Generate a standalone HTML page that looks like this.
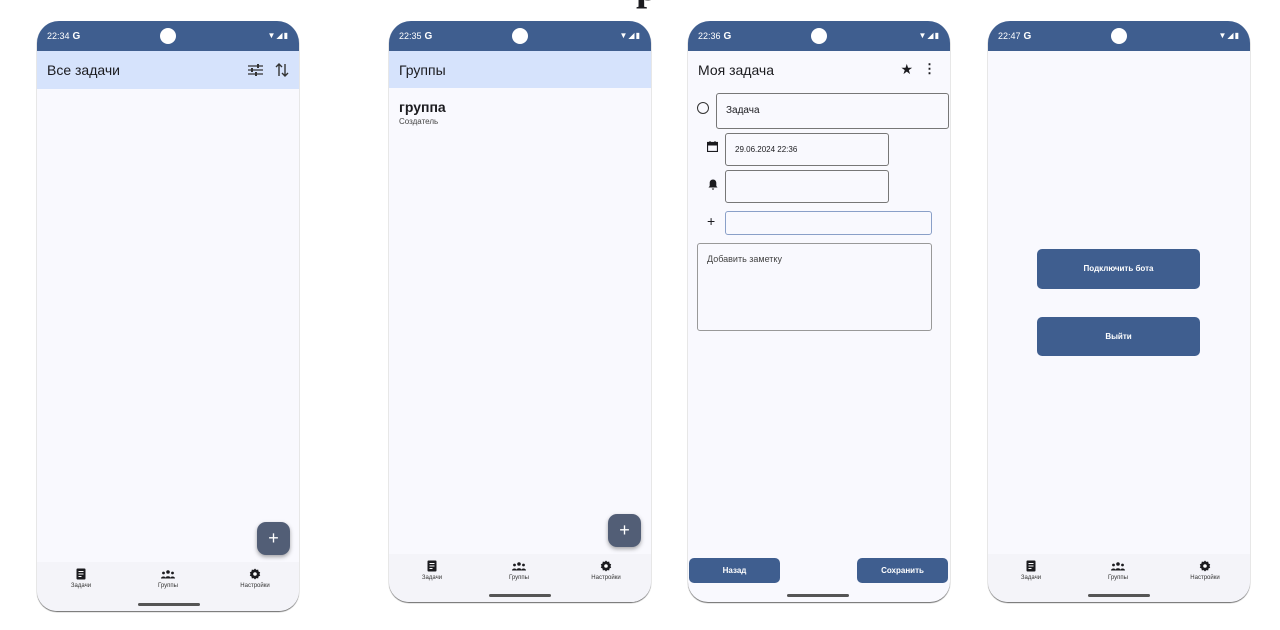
<!DOCTYPE html>
<html><head><meta charset="utf-8"><style>
*{margin:0;padding:0;box-sizing:border-box}
body{width:1280px;height:630px;background:#fff;position:relative;overflow:hidden;font-family:"Liberation Sans",sans-serif;color:#1b1b1f}
.ph{position:absolute;top:21px;width:262px;background:#f9f9fe;border-radius:22px 22px 20px 20px;overflow:hidden;box-shadow:0 1px 1px #666}
.sb{position:absolute;left:0;top:0;width:100%;height:30px;background:#3f5e8f;color:#fff;font-size:9px}
.sb .t{position:absolute;left:10px;top:10px}
.sb .t b{font-size:10px;margin-left:3px}
.sb .cam{position:absolute;left:123px;top:7px;width:16px;height:16px;border-radius:50%;background:#fff}
.sb .ic{position:absolute;right:10px;top:10px;font-size:8px;letter-spacing:1px}
.ab{position:absolute;left:0;top:30px;width:100%;height:38px;background:#d6e3fc;font-size:14px;padding:11px 10px}
.nav{position:absolute;left:0;width:100%;height:50px;background:#f4f4f9}
.nav div{position:absolute;top:6px;width:60px;text-align:center;font-size:6px;color:#333}
.nav svg{display:block;margin:0 auto 3px}
.hb{position:absolute;width:62px;height:3px;border-radius:2px;background:#555}
.fab{position:absolute;width:33px;height:33px;border-radius:9px;background:#525e76;color:#fff;font-size:18px;text-align:center;line-height:32px;box-shadow:0 2px 4px rgba(0,0,0,.35)}
.fld{position:absolute;border:1px solid #777;border-radius:3px;font-size:10px}
.btn{position:absolute;background:#3f5e8f;color:#fff;font-size:8px;font-weight:bold;text-align:center;border-radius:5px}
</style></head><body>
<div style="position:absolute;left:636px;top:-37px;font-family:'Liberation Serif',serif;font-size:40px;font-weight:bold">р</div>

<svg width="0" height="0" style="position:absolute"><defs>
<symbol id="doc" viewBox="0 0 12 12"><rect x="1.5" y="0.5" width="9" height="11" rx="1" fill="#1b1b1f"/><rect x="3.5" y="3" width="5" height="1" fill="#fff"/><rect x="3.5" y="5.5" width="5" height="1" fill="#fff"/><rect x="3.5" y="8" width="3" height="1" fill="#fff"/></symbol>
<symbol id="grp" viewBox="0 0 14 10"><circle cx="7" cy="3" r="1.8" fill="#1b1b1f"/><circle cx="2.5" cy="4" r="1.4" fill="#1b1b1f"/><circle cx="11.5" cy="4" r="1.4" fill="#1b1b1f"/><path d="M4 9.5c0-3 6-3 6 0zM0 9.5c0-2 3-2.5 4-1.5v1.5zM14 9.5c0-2-3-2.5-4-1.5v1.5z" fill="#1b1b1f"/></symbol>
<symbol id="gear" viewBox="0 0 12 12"><path d="M6 0.5l1.3 1.4 1.9-.3.3 1.9 1.7.9-.7 1.6.7 1.6-1.7.9-.3 1.9-1.9-.3L6 11.5 4.7 10.1l-1.9.3-.3-1.9-1.7-.9.7-1.6-.7-1.6 1.7-.9.3-1.9 1.9.3z" fill="#1b1b1f"/><circle cx="6" cy="6" r="1.8" fill="#fff"/></symbol>
</defs></svg>

<div class="ph" style="left:37px;height:590px">
 <div class="sb"><span class="t">22:34<b>G</b></span><div class="cam"></div><span class="ic">▼◢▮</span></div>
 <div class="ab">Все задачи
  <svg style="position:absolute;right:36px;top:13px" width="15" height="12" viewBox="0 0 15 12"><g stroke="#333" stroke-width="1.3"><line x1="0" y1="2" x2="15" y2="2"/><line x1="0" y1="6" x2="15" y2="6"/><line x1="0" y1="10" x2="15" y2="10"/></g><g fill="#333"><rect x="9" y="0" width="2" height="4"/><rect x="3" y="4" width="2" height="4"/><rect x="7" y="8" width="2" height="4"/></g></svg>
  <svg style="position:absolute;right:10px;top:12px" width="14" height="14" viewBox="0 0 14 14"><g stroke="#333" stroke-width="1.4" fill="none"><path d="M4 13V1M1 4l3-3 3 3M10 1v12M7 10l3 3 3-3"/></g></svg>
 </div>
 <div class="fab" style="left:220px;top:501px">+</div>
 <div class="nav" style="top:541px"><div style="left:14px"><svg width="12" height="12"><use href="#doc"/></svg>Задачи</div><div style="left:101px"><svg width="14" height="10" style="margin-top:1px;margin-bottom:4px"><use href="#grp"/></svg>Группы</div><div style="left:188px"><svg width="12" height="12"><use href="#gear"/></svg>Настройки</div></div>
 <div class="hb" style="left:101px;top:582px"></div>
</div>

<div class="ph" style="left:389px;height:581px">
 <div class="sb"><span class="t">22:35<b>G</b></span><div class="cam"></div><span class="ic">▼◢▮</span></div>
 <div class="ab" style="height:37px">Группы</div>
 <div style="position:absolute;left:10px;top:78px;font-size:14px;font-weight:bold">группа</div>
 <div style="position:absolute;left:10px;top:96px;font-size:8px;color:#444">Создатель</div>
 <div class="fab" style="left:219px;top:493px">+</div>
 <div class="nav" style="top:533px"><div style="left:13px"><svg width="12" height="12"><use href="#doc"/></svg>Задачи</div><div style="left:100px"><svg width="14" height="10" style="margin-top:1px;margin-bottom:4px"><use href="#grp"/></svg>Группы</div><div style="left:187px"><svg width="12" height="12"><use href="#gear"/></svg>Настройки</div></div>
 <div class="hb" style="left:100px;top:573px"></div>
</div>

<div class="ph" style="left:688px;height:581px">
 <div class="sb"><span class="t">22:36<b>G</b></span><div class="cam"></div><span class="ic">▼◢▮</span></div>
 <div style="position:absolute;left:10px;top:41px;font-size:14px">Моя задача</div>
 <div style="position:absolute;right:37px;top:40px;font-size:14px">★</div>
 <div style="position:absolute;right:14px;top:40px;font-size:13px;font-weight:bold">⋮</div>
 <div style="position:absolute;left:9px;top:81px;width:12px;height:12px;border:1.5px solid #333;border-radius:50%"></div>
 <div class="fld" style="left:28px;top:72px;width:233px;height:36px;padding:11px 9px">Задача</div>
 <svg style="position:absolute;left:19px;top:120px" width="11" height="11" viewBox="0 0 11 11"><rect x="0.5" y="1.5" width="10" height="9" fill="none" stroke="#1b1b1f" stroke-width="1.2"/><rect x="0.5" y="1.5" width="10" height="3" fill="#1b1b1f"/><rect x="2.5" y="0" width="1" height="2" fill="#1b1b1f"/><rect x="7.5" y="0" width="1" height="2" fill="#1b1b1f"/></svg>
 <svg style="position:absolute;left:20px;top:158px" width="10" height="11" viewBox="0 0 10 11"><path d="M5 0.5c2 0 3.3 1.5 3.3 3.5v3L9.5 8.5h-9L1.7 7V4C1.7 2 3 0.5 5 0.5zM3.8 9.5h2.4a1.2 1.2 0 0 1-2.4 0z" fill="#1b1b1f"/></svg>
 <div style="position:absolute;left:19px;top:192px;font-size:14px">+</div>
 <div class="fld" style="left:37px;top:112px;width:164px;height:33px;padding:11px 9px;font-size:8px">29.06.2024 22:36</div>
 <div class="fld" style="left:37px;top:149px;width:164px;height:33px"></div>
 <div class="fld" style="left:37px;top:190px;width:207px;height:24px;border-color:#8aa0c8"></div>
 <div class="fld" style="left:9px;top:222px;width:235px;height:88px;padding:10px 9px;color:#444;font-size:9px;border-color:#999">Добавить заметку</div>
 <div class="btn" style="left:1px;top:537px;width:91px;height:25px;line-height:25px">Назад</div>
 <div class="btn" style="left:169px;top:537px;width:91px;height:25px;line-height:25px">Сохранить</div>
 <div class="hb" style="left:99px;top:573px"></div>
</div>

<div class="ph" style="left:988px;height:581px">
 <div class="sb"><span class="t">22:47<b>G</b></span><div class="cam"></div><span class="ic">▼◢▮</span></div>
 <div class="btn" style="left:49px;top:228px;width:163px;height:40px;line-height:40px">Подключить бота</div>
 <div class="btn" style="left:49px;top:296px;width:163px;height:39px;line-height:39px">Выйти</div>
 <div class="nav" style="top:533px"><div style="left:13px"><svg width="12" height="12"><use href="#doc"/></svg>Задачи</div><div style="left:100px"><svg width="14" height="10" style="margin-top:1px;margin-bottom:4px"><use href="#grp"/></svg>Группы</div><div style="left:187px"><svg width="12" height="12"><use href="#gear"/></svg>Настройки</div></div>
 <div class="hb" style="left:100px;top:573px"></div>
</div>
</body></html>
